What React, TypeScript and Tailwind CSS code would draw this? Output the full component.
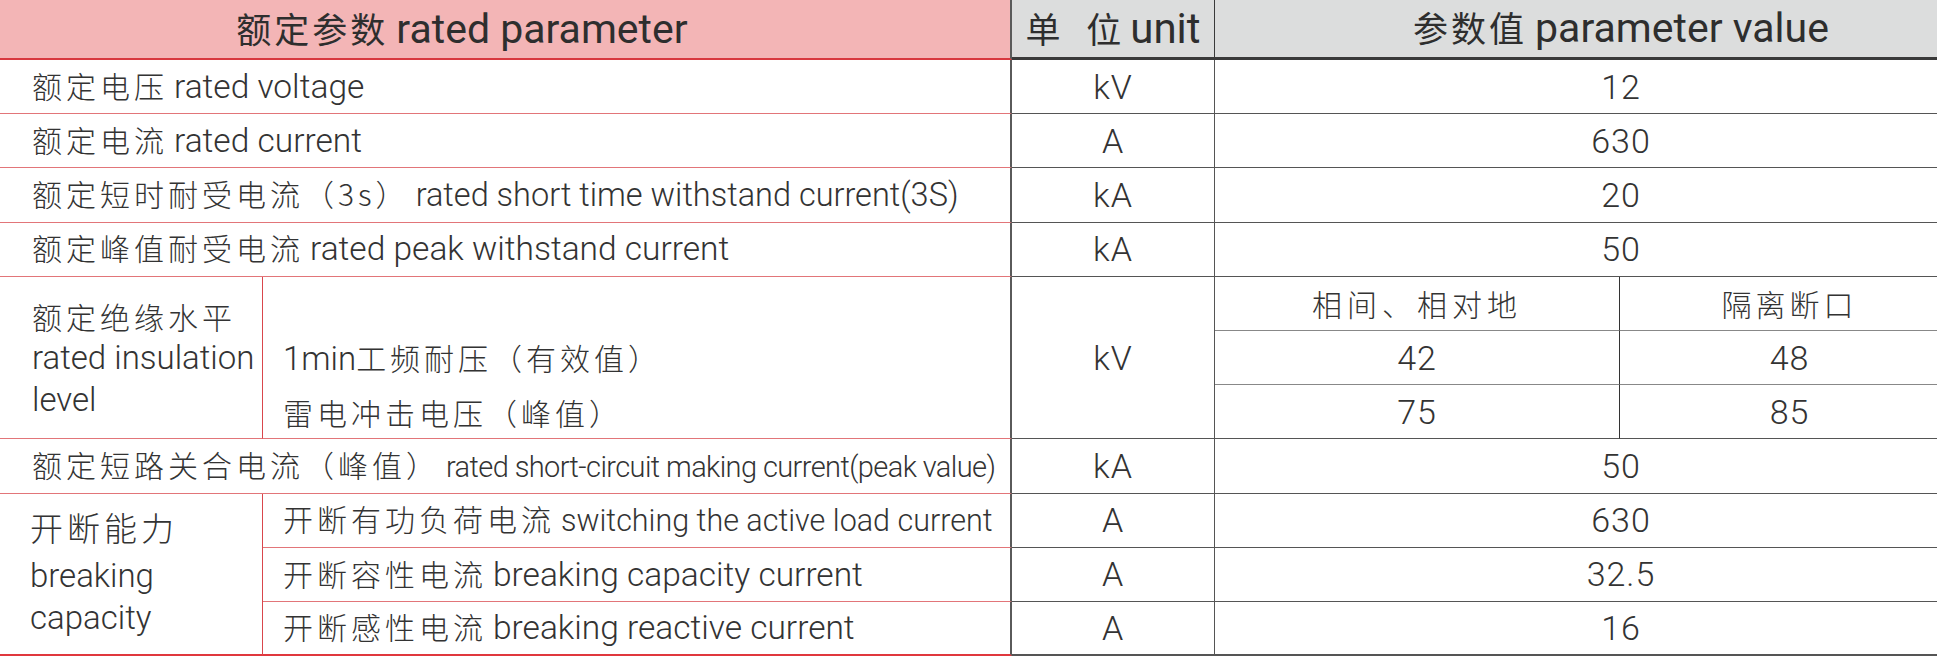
const cnFont = "font-['Noto_Sans_CJK_SC',sans-serif]";
const enFont = "font-['Roboto','Liberation_Sans',sans-serif]";

const redLine = "border-[#e27579]";
const darkLine = "border-[#555]";

type LabelProps = {
  cn: string;
  en?: string;
  enClass?: string;
};

function Label({ cn, en, enClass = "text-[33.5px]" }: LabelProps) {
  return (
    <span className="whitespace-nowrap leading-none">
      <span className={`${cnFont} text-[30px] tracking-[4px] font-light`}>{cn}</span>
      {en && <span className={`${enFont} ${enClass} font-light ml-[6px]`}>{en}</span>}
    </span>
  );
}

function Num({ children }: { children: React.ReactNode }) {
  return (
    <span className={`${enFont} text-[34px] font-light tracking-[1px] leading-none`}>
      {children}
    </span>
  );
}

type SimpleRow = {
  cn: string;
  en: string;
  unit: string;
  value: string;
  enClass?: string;
};

const topRows: SimpleRow[] = [
  { cn: "额定电压", en: "rated voltage", unit: "kV", value: "12" },
  { cn: "额定电流", en: "rated current", unit: "A", value: "630" },
  {
    cn: "额定短时耐受电流（3s）",
    en: "rated short time withstand current(3S)",
    unit: "kA",
    value: "20",
    enClass: "text-[32.5px]",
  },
  {
    cn: "额定峰值耐受电流",
    en: "rated peak withstand current",
    unit: "kA",
    value: "50",
  },
];

const breaking = [
  {
    cn: "开断有功负荷电流",
    en: "switching the active load current",
    value: "630",
    enClass: "text-[30.5px]",
  },
  { cn: "开断容性电流", en: "breaking capacity current", value: "32.5" },
  { cn: "开断感性电流", en: "breaking reactive current", value: "16" },
];

function LabelCell({ children }: { children: React.ReactNode }) {
  return (
    <div className={`col-span-2 flex items-center border-b border-r-2 ${redLine} !border-r-[#5a5a5a] pl-[32px] text-[#333]`}>
      {children}
    </div>
  );
}

function UnitCell({ children, last }: { children: React.ReactNode; last?: boolean }) {
  return (
    <div className={`flex items-center justify-center ${last ? "border-b-2" : "border-b"} border-r ${darkLine} text-[#333]`}>
      <Num>{children}</Num>
    </div>
  );
}

function ValueCell({ children, last }: { children: React.ReactNode; last?: boolean }) {
  return (
    <div className={`col-span-2 flex items-center justify-center ${last ? "border-b-2" : "border-b"} ${darkLine} pl-[90px] text-[#333]`}>
      <Num>{children}</Num>
    </div>
  );
}

export default function App() {
  return (
    <div className="w-[1938px] bg-white">
      <div className="grid w-[1937px] grid-cols-[263px_749px_203px_405px_317px] grid-rows-[60px_repeat(10,54.2px)_54px]">
        {/* header */}
        <div className="col-span-2 flex items-center justify-center border-b-2 border-r-2 border-b-[#d8383f] border-r-[#5a5a5a] bg-[#f3b5b6] pr-[86px] text-[#2e2e2e]">
          <span className="whitespace-nowrap leading-none">
            <span className={`${cnFont} text-[35px] tracking-[3px]`}>额定参数</span>
            <span className={`${enFont} text-[41px] ml-[8px]`}>rated parameter</span>
          </span>
        </div>
        <div className="flex items-center justify-center border-b-[3px] border-r border-[#3a3a3a] bg-[#dcdddd] text-[#2e2e2e]">
          <span className="whitespace-nowrap leading-none">
            <span className={`${cnFont} text-[35px] tracking-[9px]`}>单 位</span>
            <span className={`${enFont} text-[42px]`}>unit</span>
          </span>
        </div>
        <div className="col-span-2 flex items-center justify-center border-b-[3px] border-[#3a3a3a] bg-[#dcdddd] pl-[90px] text-[#2e2e2e]">
          <span className="whitespace-nowrap leading-none">
            <span className={`${cnFont} text-[35px] tracking-[3px]`}>参数值</span>
            <span className={`${enFont} text-[41px] ml-[8px]`}>parameter value</span>
          </span>
        </div>

        {/* simple rows */}
        {topRows.map((row) => (
          <div key={row.cn} className="contents">
            <LabelCell>
              <Label cn={row.cn} en={row.en} enClass={row.enClass} />
            </LabelCell>
            <UnitCell>{row.unit}</UnitCell>
            <ValueCell>{row.value}</ValueCell>
          </div>
        ))}

        {/* insulation level */}
        <div className={`row-span-3 flex flex-col justify-center border-b border-r ${redLine} !border-r-[#d9464c] pl-[32px] text-[#333]`}>
          <span className={`${cnFont} text-[30px] tracking-[4px] font-light leading-[42px]`}>额定绝缘水平</span>
          <span className={`${enFont} text-[33px] font-light leading-[42px]`}>rated insulation</span>
          <span className={`${enFont} text-[33px] font-light leading-[42px]`}>level</span>
        </div>
        <div className="border-r-2 border-[#5a5a5a]" />
        <div className={`row-span-3 flex items-center justify-center border-b border-r ${darkLine} text-[#333]`}>
          <Num>kV</Num>
        </div>
        <div className="flex items-center justify-center border-b border-r border-b-[#888] border-r-[#333] text-[#333]">
          <span className={`${cnFont} text-[30px] tracking-[5px] font-light leading-none`}>相间、相对地</span>
        </div>
        <div className="flex items-center justify-center border-b border-[#888] pl-[22px] text-[#333]">
          <span className={`${cnFont} text-[30px] tracking-[4px] font-light leading-none`}>隔离断口</span>
        </div>

        <div className="flex items-center border-r-2 border-[#5a5a5a] pl-[20px] text-[#333]">
          <span className="whitespace-nowrap leading-none">
            <span className={`${enFont} text-[33px] font-light`}>1min</span>
            <span className={`${cnFont} text-[30px] tracking-[4px] font-light`}>工频耐压（有效值）</span>
          </span>
        </div>
        <div className="flex items-center justify-center border-b border-r border-b-[#888] border-r-[#333] text-[#333]">
          <Num>42</Num>
        </div>
        <div className="flex items-center justify-center border-b border-[#888] pl-[22px] text-[#333]">
          <Num>48</Num>
        </div>

        <div className={`flex items-center border-b border-r-2 ${redLine} !border-r-[#5a5a5a] pl-[20px] text-[#333]`}>
          <span className={`${cnFont} text-[30px] tracking-[4px] font-light leading-none`}>雷电冲击电压（峰值）</span>
        </div>
        <div className={`flex items-center justify-center border-b border-r ${darkLine} !border-r-[#333] text-[#333]`}>
          <Num>75</Num>
        </div>
        <div className={`flex items-center justify-center border-b ${darkLine} pl-[22px] text-[#333]`}>
          <Num>85</Num>
        </div>

        {/* making current */}
        <LabelCell>
          <Label
            cn="额定短路关合电流（峰值）"
            en="rated short-circuit making current(peak value)"
            enClass="text-[29px] tracking-[-0.6px]"
          />
        </LabelCell>
        <UnitCell>kA</UnitCell>
        <ValueCell>50</ValueCell>

        {/* breaking capacity */}
        <div className="row-span-3 flex flex-col justify-center border-b-2 border-r border-b-[#e0383e] border-r-[#d9464c] pl-[30px] text-[#333]">
          <span className={`${cnFont} mb-[10px] text-[33px] tracking-[4px] font-light leading-[36px]`}>开断能力</span>
          <span className={`${enFont} text-[33px] font-light leading-[42px]`}>breaking</span>
          <span className={`${enFont} text-[33px] font-light leading-[42px]`}>capacity</span>
        </div>
        {breaking.map((row, i) => {
          const last = i === breaking.length - 1;
          return (
            <div key={row.cn} className="contents">
              <div
                className={`flex items-center ${last ? "border-b-2 border-b-[#e0383e]" : `border-b ${redLine}`} border-r-2 border-r-[#5a5a5a] pl-[20px] text-[#333]`}
              >
                <Label cn={row.cn} en={row.en} enClass={row.enClass} />
              </div>
              <UnitCell last={last}>A</UnitCell>
              <ValueCell last={last}>{row.value}</ValueCell>
            </div>
          );
        })}
      </div>
    </div>
  );
}
